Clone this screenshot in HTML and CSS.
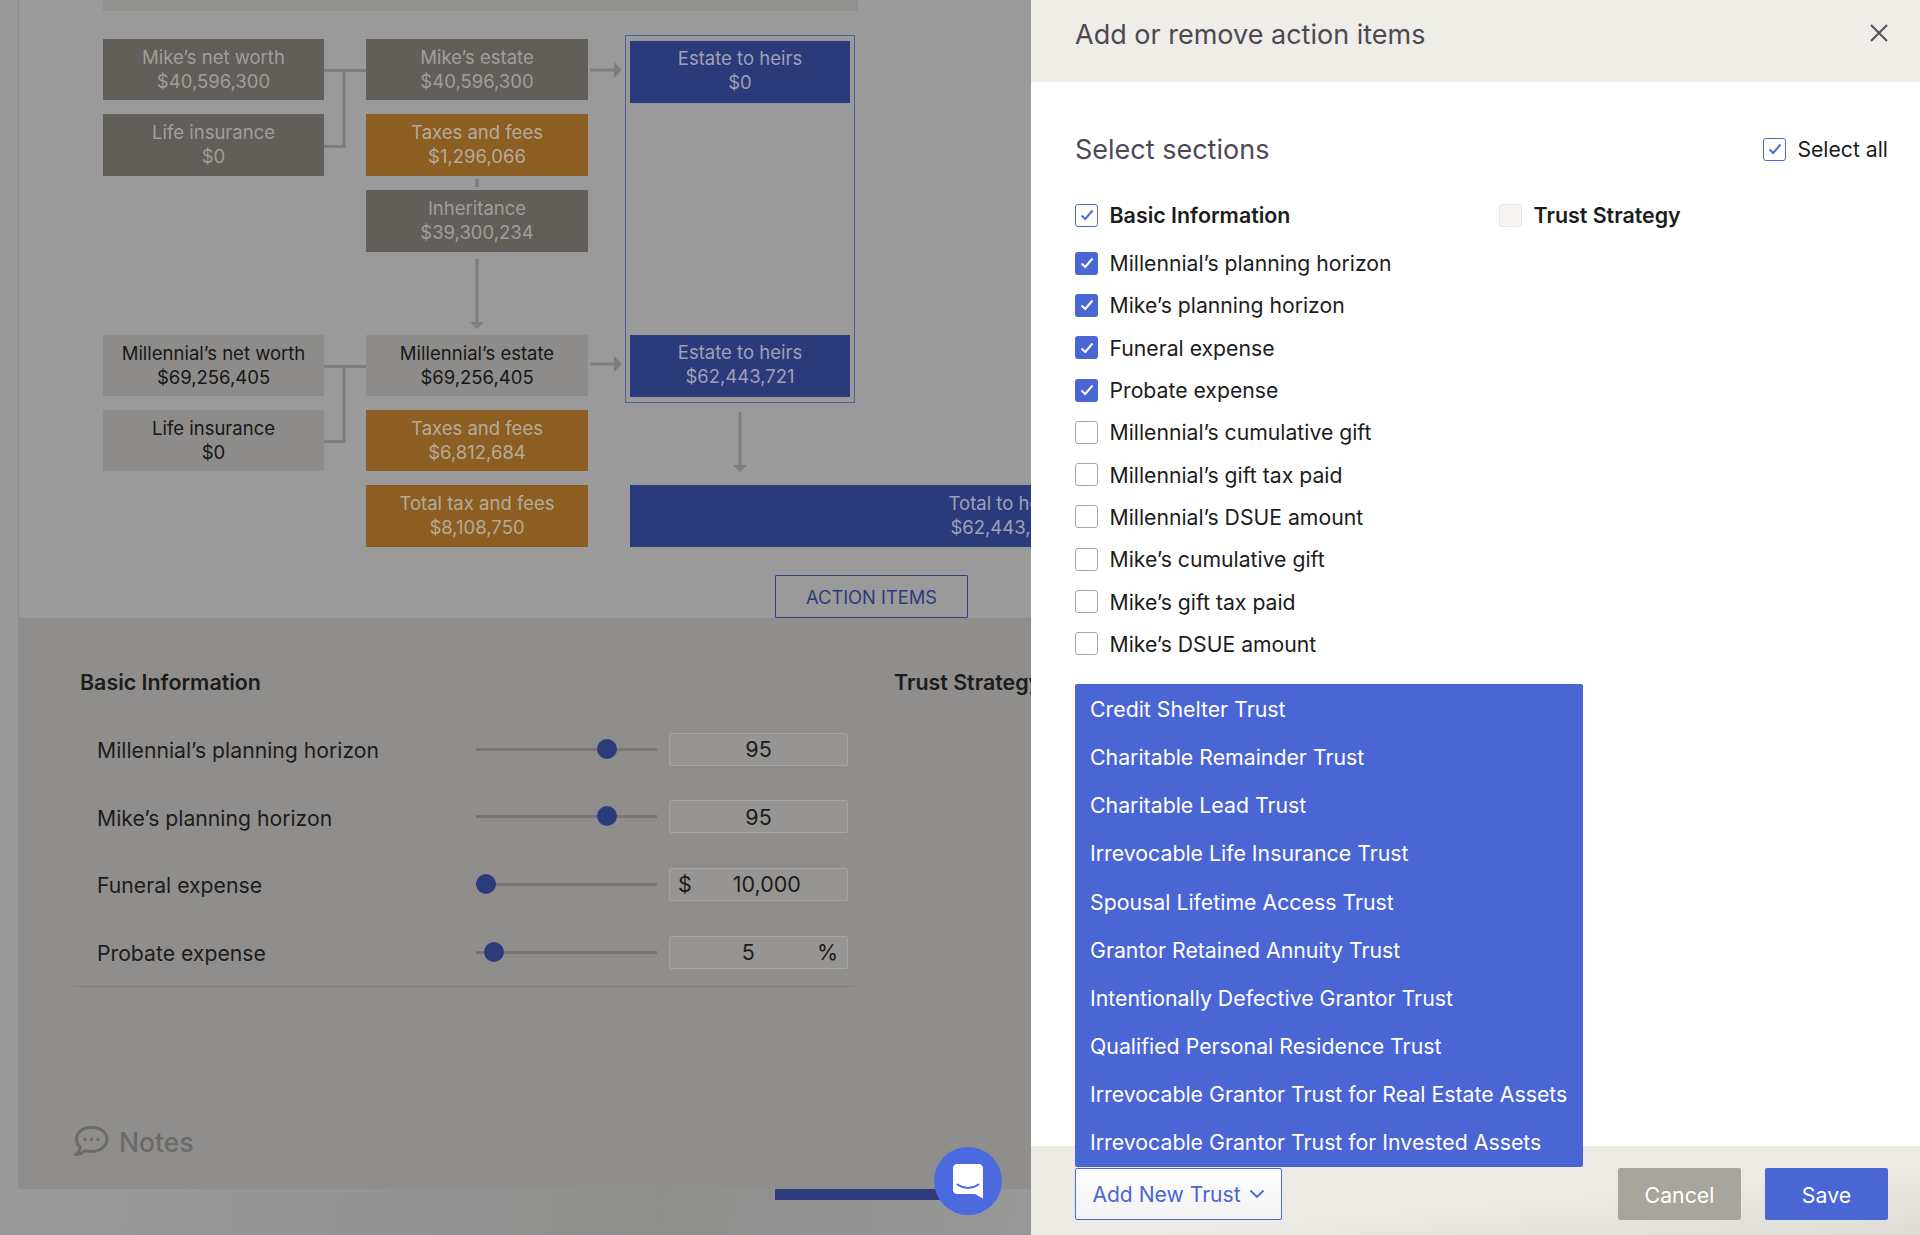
FILE: index.html
```html
<!DOCTYPE html>
<html lang="en">
<head>
<meta charset="utf-8">
<title>Add or remove action items</title>
<link rel="stylesheet" href="styles.css">
</head>
<body>
<div class="app">
  <main class="page">
    <section class="overview">
      <div class="topbar"></div>
      <div class="diagram">
        <svg class="wires" width="960" height="560" viewBox="0 0 960 560" aria-hidden="true">
          <g class="wire">
            <path d="M221 31.500H263M241 31.500V107.500H221"/>
            <path d="M221 327.500H263M241 327.500V402.500H221"/>
            <path d="M487 31H515"/>
            <path d="M487 325H515"/>
            <path d="M374 140V148"/>
            <path d="M374 220V284"/>
            <path d="M637 373V428"/>
          </g>
          <g class="head">
            <path d="M511 23L519 31L511 39Z"/>
            <path d="M511 317L519 325L511 333Z"/>
            <path d="M367 283H381L374 290Z"/>
            <path d="M630 426H644L637 433Z"/>
          </g>
        </svg>
        <div class="node grey c1 r1">Mike’s net worth<br>$40,596,300</div>
        <div class="node grey c1 r2">Life insurance<br>$0</div>
        <div class="node grey c2 r1">Mike’s estate<br>$40,596,300</div>
        <div class="node orange c2 r2">Taxes and fees<br>$1,296,066</div>
        <div class="node grey c2 r3">Inheritance<br>$39,300,234</div>
        <div class="frame">
          <div class="node blue">Estate to heirs<br>$0</div>
          <div class="node blue">Estate to heirs<br>$62,443,721</div>
        </div>
        <div class="node light c1 r5">Millennial’s net worth<br>$69,256,405</div>
        <div class="node light c1 r6">Life insurance<br>$0</div>
        <div class="node light c2 r5">Millennial’s estate<br>$69,256,405</div>
        <div class="node orange c2 r6">Taxes and fees<br>$6,812,684</div>
        <div class="node orange c2 r7">Total tax and fees<br>$8,108,750</div>
        <div class="node blue total">Total to heirs<br>$62,443,721</div>
      </div>
      <div class="action-row"><button class="action-btn">ACTION ITEMS</button></div>
    </section>
    <section class="details">
      <div class="detail-heads">
        <h3 class="detail-title">Basic Information</h3>
        <h3 class="detail-title">Trust Strategy</h3>
      </div>
      <div class="detail-rows">
        <div class="detail-row">
          <span class="detail-label">Millennial’s planning horizon</span>
          <div class="slider"><span class="thumb" style="left:121px"></span></div>
          <div class="field field-mid">95</div>
        </div>
        <div class="detail-row">
          <span class="detail-label">Mike’s planning horizon</span>
          <div class="slider"><span class="thumb" style="left:121px"></span></div>
          <div class="field field-mid">95</div>
        </div>
        <div class="detail-row">
          <span class="detail-label">Funeral expense</span>
          <div class="slider"><span class="thumb" style="left:0"></span></div>
          <div class="field field-dollar"><span>$</span><span class="field-val">10,000</span></div>
        </div>
        <div class="detail-row">
          <span class="detail-label">Probate expense</span>
          <div class="slider"><span class="thumb" style="left:8px"></span></div>
          <div class="field field-pct"><span class="field-val">5</span><span>%</span></div>
        </div>
      </div>
      <div class="notes">
        <svg class="notes-icon" width="35" height="30" viewBox="0 0 35 30" aria-hidden="true">
          <path d="M17.500 1.500C8.500 1.500 2.500 6.500 2.500 13C2.500 16.500 4 19 6 21C5.800 24 4 27 1.500 28.500C5.500 28.500 8.500 27.300 10.500 24.800C12.500 25.300 15 25.500 17.500 25.500C26.500 25.500 33 20 33 13.500C33 6.500 26.500 1.500 17.500 1.500Z"/>
          <circle cx="11" cy="13.500" r="1.700"/><circle cx="17.500" cy="13.500" r="1.700"/><circle cx="24" cy="13.500" r="1.700"/>
        </svg>
        <span class="notes-text">Notes</span>
      </div>
    </section>
    <div class="bottom-strip"><span class="progress"></span></div>
    <button class="chat" aria-label="Chat">
      <svg width="30" height="35" viewBox="0 0 30 35" aria-hidden="true">
        <path class="bubble" d="M4 0H26C28.200 0 30 1.800 30 4V34.500L22 30H4C1.800 30 0 28.200 0 26V4C0 1.800 1.800 0 4 0Z"/>
        <path class="smile" d="M4.500 20.500C11 25 19 25 25.500 20.500"/>
      </svg>
    </button>
  </main>
  <aside class="panel">
    <header class="panel-head">
      <h2 class="panel-title">Add or remove action items</h2>
      <svg class="close" width="20" height="20" viewBox="0 0 20 20" aria-hidden="true"><path d="M2 2L18 18M18 2L2 18"/></svg>
    </header>
    <div class="panel-body">
      <div class="sel-head">
        <h3 class="sel-title">Select sections</h3>
        <label class="check check-all"><span class="box outline"><svg width="14" height="12" viewBox="0 0 14 12"><path d="M1.500 6.500L5.200 10L12.500 1.500"/></svg></span>Select all</label>
      </div>
      <div class="sel-cols">
        <label class="check strong"><span class="box outline"><svg width="14" height="12" viewBox="0 0 14 12"><path d="M1.500 6.500L5.200 10L12.500 1.500"/></svg></span>Basic Information</label>
        <label class="check strong"><span class="box blank"></span>Trust Strategy</label>
      </div>
      <ul class="items">
        <li class="check"><span class="box filled"><svg width="14" height="12" viewBox="0 0 14 12"><path d="M1.500 6.500L5.200 10L12.500 1.500"/></svg></span>Millennial’s planning horizon</li>
        <li class="check"><span class="box filled"><svg width="14" height="12" viewBox="0 0 14 12"><path d="M1.500 6.500L5.200 10L12.500 1.500"/></svg></span>Mike’s planning horizon</li>
        <li class="check"><span class="box filled"><svg width="14" height="12" viewBox="0 0 14 12"><path d="M1.500 6.500L5.200 10L12.500 1.500"/></svg></span>Funeral expense</li>
        <li class="check"><span class="box filled"><svg width="14" height="12" viewBox="0 0 14 12"><path d="M1.500 6.500L5.200 10L12.500 1.500"/></svg></span>Probate expense</li>
        <li class="check"><span class="box empty"></span>Millennial’s cumulative gift</li>
        <li class="check"><span class="box empty"></span>Millennial’s gift tax paid</li>
        <li class="check"><span class="box empty"></span>Millennial’s DSUE amount</li>
        <li class="check"><span class="box empty"></span>Mike’s cumulative gift</li>
        <li class="check"><span class="box empty"></span>Mike’s gift tax paid</li>
        <li class="check"><span class="box empty"></span>Mike’s DSUE amount</li>
      </ul>
    </div>
    <footer class="panel-foot">
      <div class="add-wrap">
        <ul class="menu">
          <li>Credit Shelter Trust</li>
          <li>Charitable Remainder Trust</li>
          <li>Charitable Lead Trust</li>
          <li>Irrevocable Life Insurance Trust</li>
          <li>Spousal Lifetime Access Trust</li>
          <li>Grantor Retained Annuity Trust</li>
          <li>Intentionally Defective Grantor Trust</li>
          <li>Qualified Personal Residence Trust</li>
          <li>Irrevocable Grantor Trust for Real Estate Assets</li>
          <li>Irrevocable Grantor Trust for Invested Assets</li>
        </ul>
        <button class="add-btn">Add New Trust
          <svg width="16" height="10" viewBox="0 0 16 10" aria-hidden="true"><path d="M1.500 1.500L8 8L14.500 1.500"/></svg>
        </button>
      </div>
      <div class="foot-actions">
        <button class="btn cancel">Cancel</button>
        <button class="btn save">Save</button>
      </div>
    </footer>
  </aside>
</div>
</body>
</html>
```
FILE: styles.css
```css
* { box-sizing: border-box; }
html, body { margin: 0; padding: 0; }
body {
  width: 1920px;
  height: 1235px;
  overflow: hidden;
  font-family: Inter, "Liberation Sans", sans-serif;
  background: #999;
}
h2, h3, ul { margin: 0; padding: 0; font-weight: 400; }
ul { list-style: none; }
button { font: inherit; cursor: pointer; }

.app { display: grid; grid-template-columns: 1031px 889px; height: 1235px; }

/* dimmed page */
.page {
  position: relative;
  overflow: hidden;
  background: linear-gradient(100deg, #999 20%, #8e8e8d 70%, #989898 100%);
  padding-left: 18px;
  display: flex;
  flex-direction: column;
}
.overview {
  height: 619px;
  background: #9a9a9a;
  border-left: 1px solid #8a8a8a;
  border-bottom: 1px solid #8a8a8a;
  margin-right: -1px;
  padding-left: 84px;
}
.topbar { width: 755px; height: 11px; background: #91908c; }
.diagram {
  position: relative;
  display: grid;
  grid-template-columns: 221px 42px 222px 42px 220px;
  grid-template-rows: 61px 62px 62px 55px 61px 61px 62px;
  row-gap: 14px;
  margin-top: 28px;
  width: 747px;
}
.wires { position: absolute; left: 0; top: 0; }
.wire path { fill: none; stroke: #7d7d7d; stroke-width: 3; }
.head path { fill: #7d7d7d; }
.node {
  position: relative;
  display: block;
  text-align: center;
  font-size: 18.500px;
  line-height: 23.500px;
  padding-top: 7px;
  font-variant-numeric: proportional-nums;
}
.c1 { grid-column: 1; }
.c2 { grid-column: 3; }
.r1 { grid-row: 1; }
.r2 { grid-row: 2; }
.r3 { grid-row: 3; }
.r5 { grid-row: 5; }
.r6 { grid-row: 6; }
.r7 { grid-row: 7; }
.grey { background: #625e5a; color: #a09e9b; }
.light { background: #8d8c8a; color: #171717; }
.orange { background: #8c5e22; color: #b5ab9a; }
.blue { background: #2b3a7a; color: #9ea1b6; }
.frame {
  grid-column: 5;
  grid-row: 1 / 6;
  margin: -4px -5px -7px -5px;
  border: 1px solid #4f609f;
  padding: 5px 4px 5px 4px;
  display: flex;
  flex-direction: column;
  justify-content: space-between;
  position: relative;
}
.frame .node { height: 62px; padding-top: 6px; }
.total { grid-column: 5; grid-row: 7; width: 750px; }
.action-row { padding-left: 672px; margin-top: 28px; }
.action-btn {
  width: 193px;
  height: 43px;
  background: transparent;
  border: 1px solid #2f3f80;
  border-radius: 1px;
  color: #2c3b7c;
  font-size: 18.300px;
  padding: 1px 0 0;
  display: block;
}

.details {
  height: 570px;
  background: #8f8e8c;
  border-left: 1px solid #8f8e8c;
  margin-right: -1px;
  padding: 49px 0 0 61px;
  position: relative;
}
.detail-heads { display: flex; }
.detail-title { flex: none; font-size: 21.400px; line-height: 28px; font-weight: 600; color: #1c1c1c; width: 814px; white-space: nowrap; }
.detail-rows {
  width: 780px;
  margin: 21px 0 0 -6px;
  padding: 15px 0 17px 0;
  border-bottom: 1px solid #807f7d;
  display: flex;
  flex-direction: column;
  gap: 33.700px;
}
.detail-row {
  display: grid;
  grid-template-columns: 402px 181px 191px;
  align-items: center;
  height: 34px;
}
.detail-label { padding: 2px 0 0 23px; font-size: 21.200px; color: #1c1c1c; white-space: nowrap; }
.slider { position: relative; height: 3px; background: #777674; }
.thumb {
  position: absolute;
  top: -9px;
  width: 20px;
  height: 20px;
  border-radius: 50%;
  background: #2c3b7c;
}
.field {
  margin-left: 12px;
  height: 33px;
  border: 1px solid #a5a4a1;
  border-radius: 2px;
  background: #969593;
  display: flex;
  align-items: center;
  font-size: 21.500px;
  color: #1c1c1c;
  width: 179px;
}
.field-mid { justify-content: center; }
.field-dollar { padding: 0 0 0 8px; }
.field-dollar .field-val { margin-left: 41px; }
.field-pct { padding: 0 9px 0 0; justify-content: flex-end; }
.field-pct .field-val { margin-right: 62px; }

.notes {
  position: absolute;
  left: 55px;
  top: 503px;
  display: flex;
  align-items: center;
  gap: 10px;
  color: #6b6a69;
}
.notes-icon path { fill: none; stroke: #6b6a69; stroke-width: 3; stroke-linejoin: round; }
.notes-icon circle { fill: #6b6a69; }
.notes-text { font-size: 26.500px; line-height: 34px; font-weight: 500; padding-top: 3px; }

.bottom-strip { flex: 1; position: relative; padding-left: 757px; }
.progress { display: block; width: 200px; height: 11px; background: #2c3b7c; }

.chat {
  position: absolute;
  left: 934px;
  top: 1147px;
  width: 68px;
  height: 68px;
  border: 0;
  border-radius: 50%;
  background: #4c6ae0;
  display: flex;
  align-items: center;
  justify-content: center;
  padding: 0;
}
.bubble { fill: #fff; }
.smile { fill: none; stroke: #4c6ae0; stroke-width: 2; stroke-linecap: round; }

/* side panel */
.panel {
  display: flex;
  flex-direction: column;
  height: 1235px;
  background: #fff;
  position: relative;
}
.panel-head {
  height: 82px;
  background: #eeede8;
  padding: 0 31px 0 44px;
  display: flex;
  justify-content: space-between;
  align-items: flex-start;
}
.panel-title { font-size: 27px; line-height: 70px; color: #4e4854; }
.close { margin-top: 23px; }
.close path { fill: none; stroke: #55505a; stroke-width: 2; }
.panel-body { flex: 1; padding: 0 32px 0 44px; }
.sel-head { display: flex; justify-content: space-between; align-items: center; padding-top: 49px; height: 85px; }
.sel-title { font-size: 27px; color: #4e4854; }
.check { display: flex; align-items: center; gap: 11.500px; font-size: 21.200px; color: #1c1c1c; white-space: nowrap; }
.check-all { gap: 11px; }
.strong { font-weight: 600; font-size: 21.400px; }
.box {
  flex: none;
  width: 23px;
  height: 23px;
  border-radius: 3px;
  display: flex;
  align-items: center;
  justify-content: center;
}
.box path { fill: none; stroke-width: 2; }
.outline { border: 1.500px solid #4c6ad6; background: #fff; }
.outline path { stroke: #4c6ad6; }
.filled { background: #4a66d4; }
.filled path { stroke: #fff; }
.empty { border: 1.500px solid #a9a6a2; background: #fff; }
.blank { border: 1.500px solid #e8e7e3; background: #f6f5f3; }
.sel-cols { display: grid; grid-template-columns: 424px 1fr; margin-top: 33px; height: 30px; }
.items { display: flex; flex-direction: column; margin-top: 12px; }
.items li { height: 42.300px; }

.panel-foot {
  height: 89px;
  background: linear-gradient(175deg, #ebeae5 60%, #dcdbd6 100%);
  padding: 22px 32px 0 44px;
  display: flex;
  justify-content: space-between;
  align-items: flex-start;
  position: relative;
}
.add-wrap { position: relative; }
.menu {
  position: absolute;
  left: 0;
  bottom: 100%;
  width: 508px;
  height: 483px;
  background: #4a66d4;
  border-radius: 2px;
  padding-top: 1px;
  margin-bottom: 1px;
}
.menu li { height: 48.150px; line-height: 48px; padding-left: 15px; font-size: 21.300px; color: #fff; white-space: nowrap; }
.add-btn {
  width: 207px;
  height: 52px;
  background: linear-gradient(#fff, #f3f2f2);
  border: 1.500px solid #4c6ad6;
  border-radius: 2px;
  color: #4a66d4;
  font-size: 21.100px;
  padding: 0;
  display: flex;
  align-items: center;
  justify-content: center;
  gap: 8px;
}
.add-btn path { fill: none; stroke: #4a66d4; stroke-width: 1.800; }
.foot-actions { display: flex; gap: 24px; }
.btn { width: 123px; height: 52px; border: 0; border-radius: 2px; color: #fff; font-size: 21.300px; padding: 1px 0 0; }
.cancel { background: #a8a49e; }
.save { background: #4a66d4; }
```
